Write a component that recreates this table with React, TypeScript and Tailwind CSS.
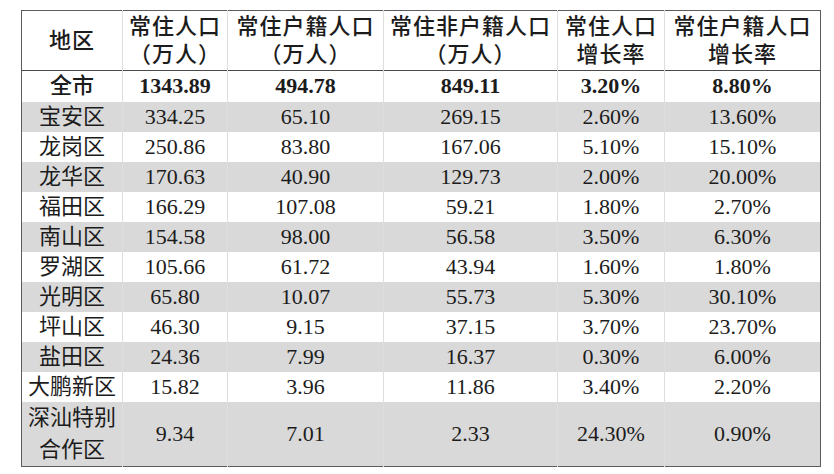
import React from 'react';

// 深圳各区常住人口统计表
type Row = {
  name: string[];
  total: string;
  huji: string;
  feihuji: string;
  rate: string;
  hujiRate: string;
};

const rows: Row[] = [
  { name: ['宝安区'], total: '334.25', huji: '65.10', feihuji: '269.15', rate: '2.60%', hujiRate: '13.60%' },
  { name: ['龙岗区'], total: '250.86', huji: '83.80', feihuji: '167.06', rate: '5.10%', hujiRate: '15.10%' },
  { name: ['龙华区'], total: '170.63', huji: '40.90', feihuji: '129.73', rate: '2.00%', hujiRate: '20.00%' },
  { name: ['福田区'], total: '166.29', huji: '107.08', feihuji: '59.21', rate: '1.80%', hujiRate: '2.70%' },
  { name: ['南山区'], total: '154.58', huji: '98.00', feihuji: '56.58', rate: '3.50%', hujiRate: '6.30%' },
  { name: ['罗湖区'], total: '105.66', huji: '61.72', feihuji: '43.94', rate: '1.60%', hujiRate: '1.80%' },
  { name: ['光明区'], total: '65.80', huji: '10.07', feihuji: '55.73', rate: '5.30%', hujiRate: '30.10%' },
  { name: ['坪山区'], total: '46.30', huji: '9.15', feihuji: '37.15', rate: '3.70%', hujiRate: '23.70%' },
  { name: ['盐田区'], total: '24.36', huji: '7.99', feihuji: '16.37', rate: '0.30%', hujiRate: '6.00%' },
  { name: ['大鹏新区'], total: '15.82', huji: '3.96', feihuji: '11.86', rate: '3.40%', hujiRate: '2.20%' },
  { name: ['深汕特别', '合作区'], total: '9.34', huji: '7.01', feihuji: '2.33', rate: '24.30%', hujiRate: '0.90%' },
];

const headers: string[][] = [
  ['地区'],
  ['常住人口', '（万人）'],
  ['常住户籍人口', '（万人）'],
  ['常住非户籍人口', '（万人）'],
  ['常住人口', '增长率'],
  ['常住户籍人口', '增长率'],
];

const cell = 'p-0 text-center align-middle whitespace-nowrap';
const divider = 'border-l border-[#dedede]';

export default function App() {
  return (
    <div
      className="w-[834px] h-[474px] bg-white pt-[10px] pl-[21px] text-[22px] text-[#1c1c1c]"
      style={{ fontFamily: '"Liberation Serif", "Noto Sans CJK SC", serif' }}
    >
      <table className="table-fixed border-collapse border border-[#5c5c5c] w-[799px]">
        <colgroup>
          <col className="w-[101px]" />
          <col className="w-[105px]" />
          <col className="w-[156px]" />
          <col className="w-[174px]" />
          <col className="w-[107px]" />
          <col className="w-[156px]" />
        </colgroup>
        <thead>
          <tr className="h-[60px] border-b border-[#4a4a4a]">
            {headers.map((lines, i) => (
              <th
                key={i}
                className={`${cell} font-medium leading-[28px] tracking-[1px] ${i > 0 ? divider : ''}`}
              >
                {lines.map((l) => (
                  <div key={l}>{l}</div>
                ))}
              </th>
            ))}
          </tr>
        </thead>
        <tbody>
          <tr className="h-[31px] bg-white leading-[30px]">
            <td className={`${cell} font-medium`}>全市</td>
            <td className={`${cell} ${divider} font-bold`}>1343.89</td>
            <td className={`${cell} ${divider} font-bold`}>494.78</td>
            <td className={`${cell} ${divider} font-bold`}>849.11</td>
            <td className={`${cell} ${divider} font-bold`}>3.20%</td>
            <td className={`${cell} ${divider} font-bold`}>8.80%</td>
          </tr>
          {rows.map((r, i) => {
            const tall = r.name.length > 1;
            return (
              <tr
                key={r.name.join('')}
                className={`${tall ? 'h-[59px]' : 'h-[30px]'} ${i % 2 === 0 ? 'bg-[#d9d9d9]' : 'bg-white'} leading-[30px]`}
              >
                <td className={`${cell} ${tall ? 'leading-[32px]' : ''}`}>
                  {r.name.map((n) => (
                    <div key={n}>{n}</div>
                  ))}
                </td>
                <td className={`${cell} ${divider}`}>{r.total}</td>
                <td className={`${cell} ${divider}`}>{r.huji}</td>
                <td className={`${cell} ${divider}`}>{r.feihuji}</td>
                <td className={`${cell} ${divider}`}>{r.rate}</td>
                <td className={`${cell} ${divider}`}>{r.hujiRate}</td>
              </tr>
            );
          })}
        </tbody>
      </table>
    </div>
  );
}
